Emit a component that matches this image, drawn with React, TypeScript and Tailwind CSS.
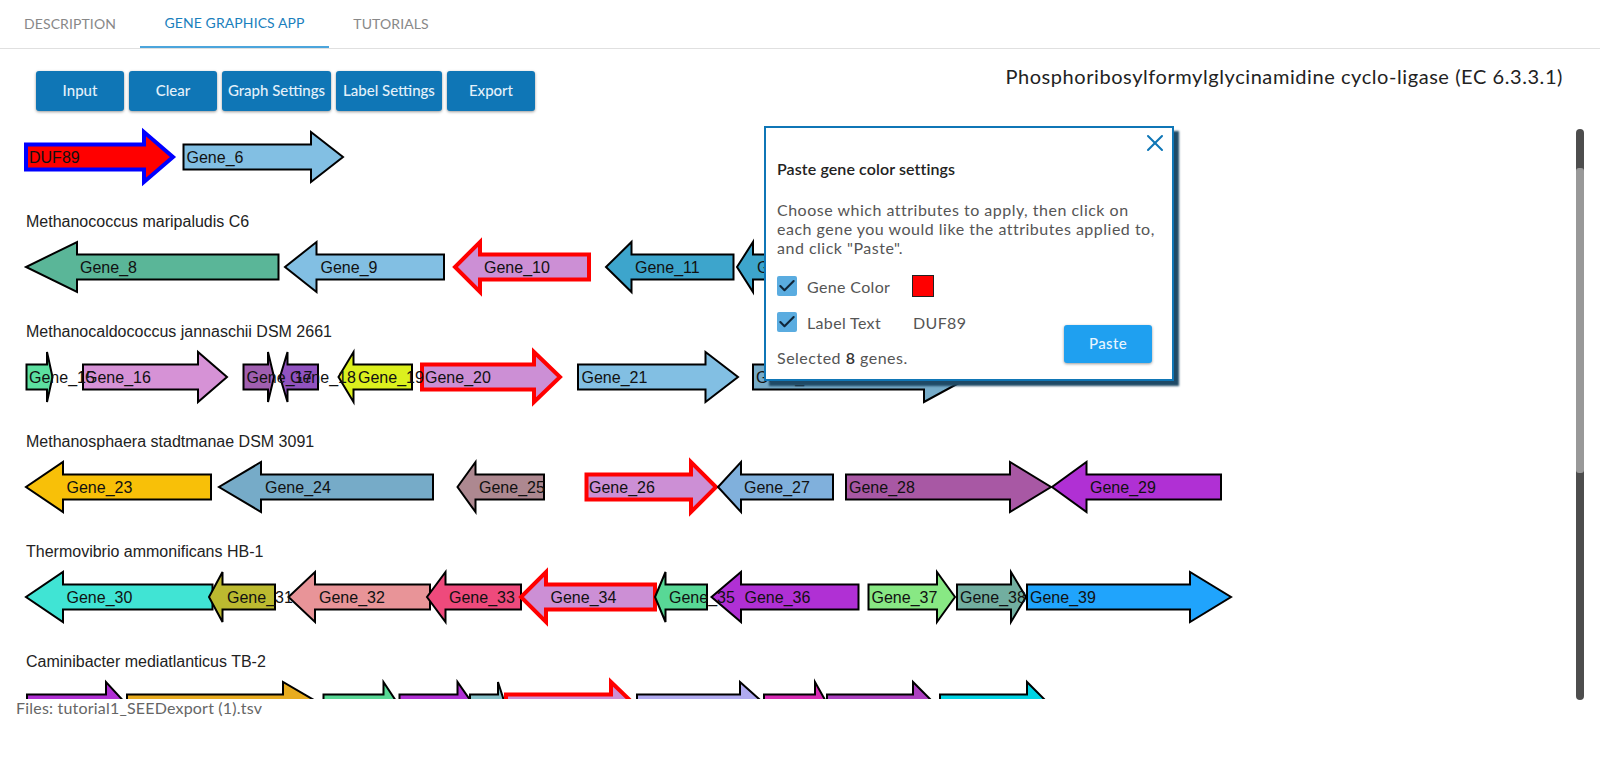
import React from 'react';
import { Check, X } from 'lucide-react';

type Gene = {
  dir: 'L' | 'R';
  // for 'R': start of shaft, head base, tip. for 'L': tip, head base, end of shaft
  a: number;
  b: number;
  c: number;
  label?: string;
  labelX?: number;
  fill: string;
  stroke?: string;
};

type Row = { title?: string; titleY?: number; y: number; genes: Gene[] };

const RED = '#ff0000';
const SEL = '#cc8fd5';

const rows: Row[] = [
  {
    y: 157,
    genes: [
      { dir: 'R', a: 26, b: 144, c: 173, label: 'DUF89', labelX: 29, fill: RED, stroke: '#0000ff' },
      { dir: 'R', a: 183.5, b: 311, c: 343, label: 'Gene_6', labelX: 186.5, fill: '#82bfe3' },
    ],
  },
  {
    title: 'Methanococcus maripaludis C6',
    titleY: 227,
    y: 267,
    genes: [
      { dir: 'L', a: 26, b: 77, c: 278.5, label: 'Gene_8', labelX: 80, fill: '#5ab698' },
      { dir: 'L', a: 285, b: 316.5, c: 444, label: 'Gene_9', labelX: 320.5, fill: '#82bfe3' },
      { dir: 'L', a: 455, b: 480, c: 589, label: 'Gene_10', labelX: 484, fill: SEL, stroke: RED },
      { dir: 'L', a: 606, b: 631.5, c: 733.5, label: 'Gene_11', labelX: 635, fill: '#3da5cc' },
      { dir: 'L', a: 737, b: 753, c: 860, label: 'Gene_12', labelX: 757, fill: '#3da5cc' },
    ],
  },
  {
    title: 'Methanocaldococcus jannaschii DSM 2661',
    titleY: 337,
    y: 377,
    genes: [
      { dir: 'R', a: 26.5, b: 47, c: 52.5, label: 'Gene_15', labelX: 29, fill: '#5ce0a0' },
      { dir: 'R', a: 83, b: 198, c: 227, label: 'Gene_16', labelX: 85, fill: '#d692d6' },
      { dir: 'R', a: 243.5, b: 268, c: 274, label: 'Gene_17', labelX: 246.5, fill: '#a05fb0' },
      { dir: 'L', a: 280, b: 287.5, c: 318, label: 'Gene_18', labelX: 290, fill: '#9153c0' },
      { dir: 'L', a: 338.5, b: 353.5, c: 412, label: 'Gene_19', labelX: 358, fill: '#dcf01e' },
      { dir: 'R', a: 422, b: 534, c: 560, label: 'Gene_20', labelX: 425, fill: SEL, stroke: RED },
      { dir: 'R', a: 578, b: 705.5, c: 738, label: 'Gene_21', labelX: 581.5, fill: '#82bfe3' },
      { dir: 'R', a: 753, b: 924, c: 970, label: 'Gene_22', labelX: 756, fill: '#76abc8' },
    ],
  },
  {
    title: 'Methanosphaera stadtmanae DSM 3091',
    titleY: 447,
    y: 487,
    genes: [
      { dir: 'L', a: 26, b: 63, c: 211, label: 'Gene_23', labelX: 66.5, fill: '#f8c008' },
      { dir: 'L', a: 219, b: 261, c: 433, label: 'Gene_24', labelX: 265, fill: '#76abc8' },
      { dir: 'L', a: 457.5, b: 475.5, c: 544, label: 'Gene_25', labelX: 479, fill: '#ad8890' },
      { dir: 'R', a: 586.5, b: 691, c: 716, label: 'Gene_26', labelX: 589, fill: SEL, stroke: RED },
      { dir: 'L', a: 718, b: 741, c: 833, label: 'Gene_27', labelX: 744, fill: '#80b0dc' },
      { dir: 'R', a: 846, b: 1010, c: 1051, label: 'Gene_28', labelX: 849, fill: '#a858a4' },
      { dir: 'L', a: 1052, b: 1086.5, c: 1221, label: 'Gene_29', labelX: 1090, fill: '#b030d4' },
    ],
  },
  {
    title: 'Thermovibrio ammonificans HB-1',
    titleY: 557,
    y: 597,
    genes: [
      { dir: 'L', a: 26, b: 63, c: 212.5, label: 'Gene_30', labelX: 66.5, fill: '#40e4d4' },
      { dir: 'L', a: 209, b: 222.5, c: 275, label: 'Gene_31', labelX: 227, fill: '#bcba30' },
      { dir: 'L', a: 288.5, b: 315, c: 430, label: 'Gene_32', labelX: 319, fill: '#e89498' },
      { dir: 'L', a: 427, b: 445.5, c: 521, label: 'Gene_33', labelX: 449, fill: '#ee4a7c' },
      { dir: 'L', a: 521, b: 546, c: 655, label: 'Gene_34', labelX: 550.5, fill: SEL, stroke: RED },
      { dir: 'L', a: 655, b: 665.5, c: 707, label: 'Gene_35', labelX: 669, fill: '#58d896' },
      { dir: 'L', a: 711.5, b: 741, c: 858.5, label: 'Gene_36', labelX: 744.5, fill: '#b030d4' },
      { dir: 'R', a: 868.5, b: 937, c: 955, label: 'Gene_37', labelX: 871.5, fill: '#88e884' },
      { dir: 'R', a: 957, b: 1011, c: 1026, label: 'Gene_38', labelX: 960, fill: '#72aea0' },
      { dir: 'R', a: 1027, b: 1190, c: 1231, label: 'Gene_39', labelX: 1030, fill: '#20a4fc' },
    ],
  },
  {
    title: 'Caminibacter mediatlanticus TB-2',
    titleY: 667,
    y: 707,
    genes: [
      { dir: 'R', a: 27, b: 106, c: 129, fill: '#b030d4' },
      { dir: 'R', a: 127, b: 283, c: 326, fill: '#e8ac20' },
      { dir: 'R', a: 323.5, b: 383.5, c: 400, fill: '#58d896' },
      { dir: 'R', a: 399.5, b: 457.5, c: 475, fill: '#b030d4' },
      { dir: 'R', a: 470, b: 498, c: 506, fill: '#84c0c8' },
      { dir: 'R', a: 506, b: 611, c: 637, fill: SEL, stroke: RED },
      { dir: 'R', a: 637, b: 740, c: 768, fill: '#b0aaf0' },
      { dir: 'R', a: 764, b: 815, c: 829, fill: '#d82cb4' },
      { dir: 'R', a: 827, b: 913, c: 938, fill: '#ac40c0' },
      { dir: 'R', a: 940, b: 1027, c: 1052, fill: '#00d4e4' },
    ],
  },
];

function arrowPoints(g: Gene, y: number) {
  const shaft = 12.5;
  const head = 25;
  const pts =
    g.dir === 'R'
      ? [
          [g.a, y - shaft],
          [g.b, y - shaft],
          [g.b, y - head],
          [g.c, y],
          [g.b, y + head],
          [g.b, y + shaft],
          [g.a, y + shaft],
        ]
      : [
          [g.c, y - shaft],
          [g.b, y - shaft],
          [g.b, y - head],
          [g.a, y],
          [g.b, y + head],
          [g.b, y + shaft],
          [g.c, y + shaft],
        ];
  return pts.map((p) => p.join(',')).join(' ');
}

function GeneChart() {
  return (
    <svg
      width={1570}
      height={579}
      viewBox="0 120 1570 579"
      className="block shrink-0 [font-family:'Liberation_Sans',Arial,sans-serif]"
    >
      {rows.map((row) => (
        <g key={row.y}>
          {row.title && (
            <text x={26} y={row.titleY} fontSize={16} fill="#222">
              {row.title}
            </text>
          )}
          {row.genes.map((g, i) => (
            <polygon
              key={i}
              points={arrowPoints(g, row.y)}
              fill={g.fill}
              stroke={g.stroke ?? '#000'}
              strokeWidth={g.stroke ? 4 : 2}
            />
          ))}
          {row.genes.map(
            (g, i) =>
              g.label && (
                <text key={i} x={g.labelX} y={row.y + 6} fontSize={16} fill="#111">
                  {g.label}
                </text>
              ),
          )}
        </g>
      ))}
    </svg>
  );
}

function Toolbar() {
  const buttons = [
    { label: 'Input', w: 'w-[88px]' },
    { label: 'Clear', w: 'w-[88px]' },
    { label: 'Graph Settings', w: 'w-[109px]' },
    { label: 'Label Settings', w: 'w-[106px]' },
    { label: 'Export', w: 'w-[88px]' },
  ];
  return (
    <div className="flex gap-[5px]">
      {buttons.map((b) => (
        <button
          key={b.label}
          className={`${b.w} h-[40px] rounded-[3px] bg-[#0f76b6] pb-[2px] text-[15px] font-medium text-[#e4f1fa] shadow-[0_1px_3px_rgba(0,0,0,0.4)]`}
        >
          {b.label}
        </button>
      ))}
    </div>
  );
}

function PasteModal() {
  return (
    <div className="absolute left-[764px] top-[126px] h-[255px] w-[410px] border-2 border-[#0f76b6] bg-white pl-[11px] text-[16px] leading-[19px] tracking-[0.35px] text-[#555] shadow-[5px_5px_2px_#1f4a66]">
      <button className="absolute right-[3px] top-[1px] text-[#0f76b6]">
        <X size={28} strokeWidth={1.75} />
      </button>
      <h3 className="pt-[31px] text-[16px] leading-[20px] font-semibold tracking-[0.1px] text-[#222]">
        Paste gene color settings
      </h3>
      <p className="mt-[21px] whitespace-nowrap tracking-[0.5px]">
        Choose which attributes to apply, then click on
        <br />
        each gene you would like the attributes applied to,
        <br />
        and click "Paste".
      </p>
      <div className="mt-[18px] flex items-center">
        <span className="flex h-[20px] w-[20px] items-center justify-center rounded-[2px] bg-[#5aace0] text-[#10263a]">
          <Check size={20} strokeWidth={2.5} />
        </span>
        <span className="ml-[10px] w-[105px]">Gene Color</span>
        <span className="h-[22px] w-[22px] border border-[#222] bg-[#ff0000]" />
      </div>
      <div className="mr-[20px] flex items-end justify-between">
        <div>
          <div className="mt-[15px] flex items-center">
            <span className="flex h-[20px] w-[20px] items-center justify-center rounded-[2px] bg-[#5aace0] text-[#10263a]">
              <Check size={20} strokeWidth={2.5} />
            </span>
            <span className="ml-[10px] w-[106px]">Label Text</span>
            <span>DUF89</span>
          </div>
          <p className="mt-[16px] tracking-[0.5px]">
            Selected <b className="font-semibold text-[#333]">8</b> genes.
          </p>
        </div>
        <button className="mb-[4px] h-[38px] w-[88px] rounded-[3px] bg-[#1fa0f0] pb-[2px] text-[15px] font-medium text-[#e8f5fe] shadow-[0_1px_3px_rgba(0,0,0,0.4)]">
          Paste
        </button>
      </div>
    </div>
  );
}

export default function App() {
  return (
    <div className="relative h-[770px] overflow-hidden bg-white font-['Lato',sans-serif]">
      <nav className="flex h-[49px] border-b border-[#e0e0e0] text-[14px] text-[#888]">
        <a className="flex h-[48px] w-[140px] items-center justify-center pb-[2px] tracking-[0.1px]">DESCRIPTION</a>
        <a className="flex h-[48px] w-[189px] items-center justify-center border-b-2 border-[#4ba5dc] pb-[1px] tracking-[0.1px] text-[#1a80bd]">
          GENE GRAPHICS APP
        </a>
        <a className="flex h-[48px] w-[124px] items-center justify-center pb-[2px] tracking-[0.1px]">TUTORIALS</a>
      </nav>

      <div className="flex h-[71px] items-start justify-between pl-[36px] pr-[37px] pt-[22px]">
        <Toolbar />
        <h2 className="-mt-[3px] text-[20px] leading-[16px] tracking-[0.57px] text-[#222]">
          Phosphoribosylformylglycinamidine cyclo-ligase (EC 6.3.3.1)
        </h2>
      </div>

      <div className="flex">
        <GeneChart />
        <div className="relative ml-[6px] mt-[9px] h-[571px] w-[8px] rounded-[4px] bg-[#4d4d4d]">
          <div className="absolute left-0 top-[39px] h-[305px] w-[8px] rounded-[3px] bg-[#999]" />
        </div>
      </div>

      <div className="-mt-[2px] pl-[16px] text-[16px] leading-[19px] tracking-[0.2px] text-[#666]">
        Files: tutorial1_SEEDexport (1).tsv
      </div>

      <PasteModal />
    </div>
  );
}
